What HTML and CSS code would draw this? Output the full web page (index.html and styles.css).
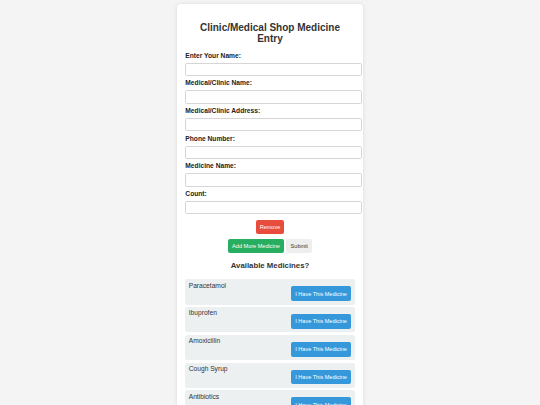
FILE: index.html
```html
<!DOCTYPE html>
<html lang="en">
<head>
<meta charset="utf-8">
<title>Clinic/Medical Shop Medicine Entry</title>
<link rel="stylesheet" href="styles.css">
</head>
<body>
<div class="card">
  <h2 class="title">Clinic/Medical Shop Medicine Entry</h2>
  <form class="form">
    <label class="label">Enter Your Name:</label>
    <input class="input" type="text">
    <label class="label">Medical/Clinic Name:</label>
    <input class="input" type="text">
    <label class="label">Medical/Clinic Address:</label>
    <input class="input" type="text">
    <label class="label">Phone Number:</label>
    <input class="input" type="text">
    <label class="label">Medicine Name:</label>
    <input class="input" type="text">
    <label class="label">Count:</label>
    <input class="input" type="text">
    <div class="actions">
      <button type="button" class="btn btn-red">Remove</button>
      <div class="btn-row">
        <button type="button" class="btn btn-green">Add More Medicine</button>
        <button type="button" class="btn btn-gray">Submit</button>
      </div>
    </div>
  </form>
  <h3 class="subtitle">Available Medicines?</h3>
  <div class="list">
    <div class="item"><span class="item-name">Paracetamol</span><button type="button" class="btn btn-blue">I Have This Medicine</button></div>
    <div class="item"><span class="item-name">Ibuprofen</span><button type="button" class="btn btn-blue">I Have This Medicine</button></div>
    <div class="item"><span class="item-name">Amoxicillin</span><button type="button" class="btn btn-blue">I Have This Medicine</button></div>
    <div class="item"><span class="item-name">Cough Syrup</span><button type="button" class="btn btn-blue">I Have This Medicine</button></div>
    <div class="item"><span class="item-name">Antibiotics</span><button type="button" class="btn btn-blue">I Have This Medicine</button></div>
  </div>
</div>
</body>
</html>
```
FILE: styles.css
```css
html, body {
  margin: 0;
  padding: 0;
}
body {
  background: #f4f4f4;
  font-family: "Liberation Sans", Arial, sans-serif;
  color: #333;
  padding-top: 3.6px;
}
.card {
  width: 169.33px;
  margin: 0 auto;
  padding: 8.33px;
  background: #fff;
  border-radius: 4px;
  box-shadow: 0 0 4px rgba(0, 0, 0, 0.1);
}
.title {
  font-size: 10px;
  font-weight: bold;
  text-align: center;
  margin: 9.6px 1px 8.2px;
  color: #333;
}
.form {
  display: flex;
  flex-direction: column;
}
.label {
  display: block;
  font-size: 6.67px;
  font-weight: bold;
  color: #222;
  line-height: 7.67px;
}
.input {
  display: block;
  width: 100%;
  height: 11.3px;
  padding: 0 2.9px;
  margin: 3.33px 0;
  border: 1px solid #d6d6d6;
  border-radius: 1.67px;
  background: #fff;
  font-size: 5.56px;
  font-family: inherit;
  align-self: flex-start;
}
.actions {
  display: flex;
  flex-direction: column;
  align-items: center;
  gap: 4.3px;
  margin-top: 2.1px;
}
.btn-row {
  display: flex;
  gap: 2.4px;
}
.btn {
  font-family: "Liberation Sans", Arial, sans-serif;
  font-size: 5.56px;
  line-height: 6.38px;
  padding: 4.17px;
  border: none;
  border-radius: 2px;
  color: #fff;
  cursor: pointer;
}
.btn-red { background: #e74c3c; }
.btn-green { background: #27ae60; }
.btn-gray { background: #eeeeee; color: #333; }
.btn-blue { background: #3498db; }
.subtitle {
  font-size: 7.8px;
  font-weight: bold;
  text-align: center;
  margin: 7.8px 0 9.4px;
  color: #333;
}
.list {
  display: flex;
  flex-direction: column;
  gap: 2.6px;
}
.item {
  display: flex;
  justify-content: space-between;
  align-items: flex-start;
  padding: 2.2px 3.6px 3.4px 3.4px;
  background: #ecf0f1;
  border-radius: 2px;
}
.item-name {
  font-size: 6.67px;
  color: #333;
}
.item .btn {
  margin-top: 4.9px;
}
```
